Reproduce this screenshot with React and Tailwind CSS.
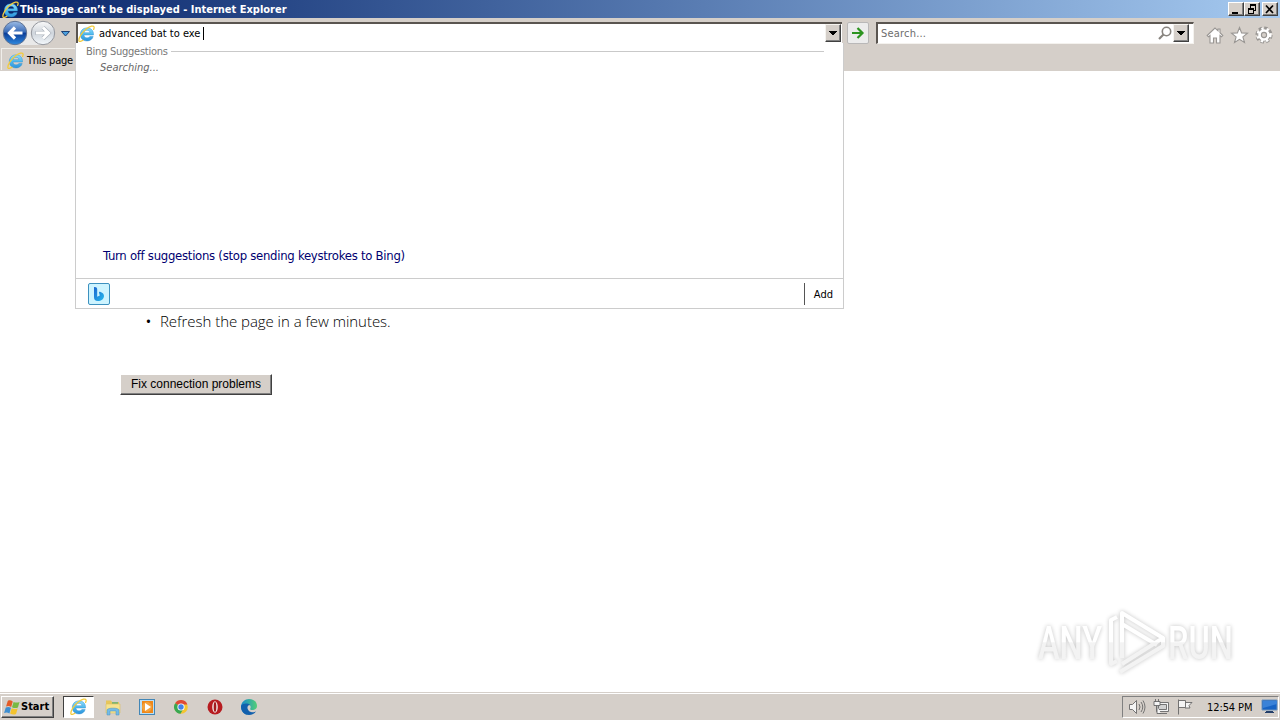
const TAHOMA = "font-['DejaVu_Sans_Condensed','DejaVu_Sans',sans-serif] [font-stretch:condensed]";

function IeIcon({ size = 16, id }) {
  return (
    <svg width={size} height={size} viewBox="0 0 16 16" className="shrink-0">
      <defs>
        <linearGradient id={id} x1="0" y1="0" x2="0" y2="1">
          <stop offset="0" stopColor="#8edcfb" />
          <stop offset=".5" stopColor="#4fb9ee" />
          <stop offset="1" stopColor="#2c93dc" />
        </linearGradient>
      </defs>
      <path
        d="M14.600 9.400H5.600c.1 1.700 1.300 2.700 3 2.700 1.200 0 2-.4 2.500-1.300h3.200c-.7 2.700-3 4.200-5.800 4.200-3.800 0-6.300-2.500-6.300-6.100 0-3.600 2.600-6.200 6.300-6.200 3.900 0 6.400 2.700 6.100 6.700ZM5.700 7.200h5.500c-.1-1.400-1.200-2.200-2.700-2.200s-2.600.8-2.800 2.200Z"
        fill={`url(#${id})`}
        stroke="#2d8ccb"
        strokeWidth=".4"
      />
      <path
        d="M4.600 14.300C2.600 15.700.9 16 .8 14.600.6 12 3.800 6.800 8 3.600 11.400 1 14.600.2 15.100 1.800c.2.700 0 1.500-.4 2.300"
        fill="none"
        stroke="#f3cb3c"
        strokeWidth="1.200"
        strokeLinecap="round"
      />
    </svg>
  );
}

function NavButtons() {
  return (
    <svg width="58" height="28" viewBox="0 0 58 28" className="shrink-0">
      <defs>
        <linearGradient id="back" x1="0" y1="0" x2="0" y2="1">
          <stop offset="0" stopColor="#9dbde6" />
          <stop offset=".45" stopColor="#3a6cb8" />
          <stop offset=".52" stopColor="#0c3f99" />
          <stop offset="1" stopColor="#2f8ae0" />
        </linearGradient>
        <linearGradient id="forward" x1="0" y1="0" x2="0" y2="1">
          <stop offset="0" stopColor="#fafafa" />
          <stop offset=".5" stopColor="#cfd5dc" />
          <stop offset="1" stopColor="#f3f8fc" />
        </linearGradient>
      </defs>
      <path d="M15 2h28v24H15z" fill="#e9e9e9" />
      <circle cx="15" cy="14" r="11.700" fill="url(#back)" stroke="#5f7394" />
      <circle cx="43" cy="14" r="11.700" fill="url(#forward)" stroke="#94979e" />
      <path d="M22.500 14H10M15 8.500 9.500 14l5.500 5.500" fill="none" stroke="#fff" strokeWidth="3.200" />
      <path d="M35.500 14H48M43 8.500l5.500 5.500-5.500 5.500" fill="none" stroke="#a9b0b9" strokeWidth="4.200" />
      <path d="M36 14h12M43 8.500l5.500 5.500-5.500 5.500" fill="none" stroke="#fff" strokeWidth="3" />
    </svg>
  );
}

function DropButton() {
  return (
    <div className="mb-[1px] flex h-[18px] w-[16px] shrink-0 items-center justify-center border border-t-[#f5f3ef] border-r-[#404040] border-b-[#404040] border-l-[#f5f3ef] bg-[#d5cfc9] shadow-[inset_-1px_-1px_0_#808080]">
      <svg width="8" height="5" viewBox="0 0 8 5" shapeRendering="crispEdges">
        <path d="M0 0h8L4 4.500Z" fill="#000" />
      </svg>
    </div>
  );
}

function WindowButton({ children, className = "" }) {
  return (
    <div
      className={`flex h-[14px] w-[16px] items-center justify-center border border-t-white border-r-[#404040] border-b-[#404040] border-l-white bg-[#d5cfc9] shadow-[inset_-1px_-1px_0_#808080] ${className}`}
    >
      <svg width="12" height="11" viewBox="0 0 12 11" fill="none" stroke="#000" shapeRendering="crispEdges">
        {children}
      </svg>
    </div>
  );
}

function TitleBar() {
  return (
    <div className="flex h-[18px] items-center bg-linear-to-r from-[#0a246a] to-[#a6caf0] pr-[2px] pl-[2px]">
      <IeIcon id="ie-title" size={17} />
      <span className={`ml-[1px] pt-[1px] text-[11px] leading-[17px] font-bold whitespace-nowrap text-white ${TAHOMA}`}>
        This page can’t be displayed - Internet Explorer
      </span>
      <div className="ml-auto flex">
        <WindowButton>
          <path d="M2 8.500h6M2 9.500h6" />
        </WindowButton>
        <WindowButton>
          <path d="M4 .5h6M4 1.500h6M4.500 1v3M9.500 1v6M8 6.500h2M2 4.500h6M2 5.500h6M2.500 5v5M7.500 5v5M2 9.500h6" />
        </WindowButton>
        <WindowButton className="ml-[2px]">
          <path d="m2 1.500 7 7.500M9 1.500 2 9" strokeWidth="1.700" shapeRendering="auto" />
        </WindowButton>
      </div>
    </div>
  );
}

function ToolIcons() {
  return (
    <svg
      width="72"
      height="20"
      viewBox="0 0 72 20"
      fill="#fff"
      stroke="#999693"
      strokeWidth="1.100"
      className="mt-[7px] ml-[12px] shrink-0"
    >
      <path d="m1.200 10.500 7.800-7.500 3 2.800V4h2v3.700l2.800 2.800-1.300 1.300-1.500-1.300V18h-3.500v-5h-3v5H4v-7.500l-1.500 1.300Z" />
      <path d="m33.500 2.500 2.100 5.400 5.900.300-4.600 3.700 1.600 5.600-5-3.200-5 3.200 1.600-5.600-4.600-3.700 5.900-.3Z" />
      <circle cx="58" cy="10" r="6.700" strokeWidth="3.800" strokeDasharray="3.200 2.060" />
      <circle cx="58" cy="10" r="6.300" />
      <circle cx="58" cy="10" r="6.300" fill="none" stroke="#fff" strokeWidth="2.600" strokeDasharray="2.200 3.060" />
      <circle cx="58" cy="10" r="4.800" stroke="#fff" />
      <circle cx="58" cy="10" r="2.600" fill="#d5cfc9" />
    </svg>
  );
}

function Toolbar() {
  return (
    <div className="flex h-[29px] items-start">
      <div className="mt-[1px]">
        <NavButtons />
      </div>
      <svg width="9" height="6" viewBox="0 0 9 6" className="mt-[13px] ml-[3px] shrink-0">
        <path d="M.5.5h8l-4 4.500Z" fill="#4ba1df" stroke="#1c4175" />
      </svg>
      <div className="mt-[4px] ml-[6px] flex h-[21px] w-[766px] items-center border-t-2 border-l-2 border-t-[#5a5550] border-l-[#5a5550] bg-white">
        <IeIcon id="ie-address" size={17} />
        <span className={`ml-[4px] pt-[2px] text-[11px] whitespace-nowrap text-black ${TAHOMA}`}>advanced bat to exe</span>
        <span className="ml-[3px] h-[13px] w-px bg-black" />
        <div className="mr-[1px] ml-auto">
          <DropButton />
        </div>
      </div>
      <div className="mt-[4px] ml-[5px] flex h-[22px] w-[22px] items-center justify-center rounded-xs border border-[#b9b8b8] bg-[#ececec]">
        <svg width="14" height="12" viewBox="0 0 14 12" fill="none" stroke="#2c9420" strokeWidth="2.200">
          <path d="M1 6h10M6.500 1l5 5-5 5" />
        </svg>
      </div>
      <div className="mt-[4px] ml-[7px] flex h-[22px] w-[318px] items-center border-t-2 border-r border-b border-l-2 border-t-[#5a5550] border-r-[#f4f2ee] border-b-[#f4f2ee] border-l-[#5a5550] bg-white">
        <span className={`ml-[3px] pt-[2px] text-[11px] tracking-[0.2px] text-[#6d6d6d] ${TAHOMA}`}>Search...</span>
        <svg width="14" height="15" viewBox="0 0 14 15" fill="none" stroke="#88847f" className="ml-auto">
          <circle cx="8.500" cy="5.500" r="4.200" strokeWidth="1.600" />
          <path d="M5.500 8.500 1 13" strokeWidth="2.200" />
        </svg>
        <div className="mr-[4px] ml-[1px]">
          <DropButton />
        </div>
      </div>
      <ToolIcons />
    </div>
  );
}

function TabRow() {
  return (
    <div className="flex h-[24px] items-center">
      <div className="ml-[1px] flex h-[22px] w-[200px] items-center border-t border-l border-[#f0eeea] pt-[1px] pl-[5px]">
        <IeIcon id="ie-tab" size={17} />
        <span className={`ml-[3px] pt-[2px] text-[11px] tracking-[-0.25px] whitespace-nowrap text-black ${TAHOMA}`}>
          This page
        </span>
      </div>
    </div>
  );
}

function Suggestions() {
  return (
    <div
      className={`absolute top-[43px] left-[75px] flex h-[266px] w-[769px] flex-col border border-t-0 border-[#cccccc] bg-white ${TAHOMA}`}
    >
      <div className="flex h-[17px] items-center pr-[19px] pl-[10px]">
        <span className="pt-[1px] text-[11px] leading-[16px] tracking-[-0.25px] whitespace-nowrap text-[#777]">
          Bing Suggestions
        </span>
        <div className="ml-[3px] h-px grow bg-[#c9c9c9]" />
      </div>
      <span className="pl-[24px] text-[11px] leading-[16px] text-[#666] italic">Searching...</span>
      <span className="mt-auto mb-[13px] pl-[27px] text-[13px] leading-[18px] tracking-[-0.28px] whitespace-nowrap text-[#000070]">
        Turn off suggestions (stop sending keystrokes to Bing)
      </span>
      <div className="flex h-[30px] shrink-0 items-center border-t border-[#ccc] pr-[10px] pl-[12px]">
        <svg width="22" height="22" viewBox="0 0 22 22">
          <defs>
            <linearGradient id="bing" x1="0" y1="0" x2="1" y2="1">
              <stop offset="0" stopColor="#1b66d0" />
              <stop offset="1" stopColor="#25b9ec" />
            </linearGradient>
          </defs>
          <rect x=".5" y=".5" width="21" height="21" rx="1.500" fill="#cdf4ff" stroke="#3d91bf" />
          <path
            d="M6 4.200c1.500-.5 3.200.3 3.200 2v7.600l2.600-1.300-.8-2.700c-.2-1 .6-1.200 1.500-.9 2.300.7 3.500 2 3.500 4 0 3-3 5-6 5s-4-1.500-4-4Z"
            fill="url(#bing)"
          />
        </svg>
        <div className="ml-auto h-[22px] w-px bg-[#555]" />
        <span className="ml-[9px] pt-[3px] text-[11px] text-black">Add</span>
      </div>
    </div>
  );
}

function Watermark() {
  return (
    <div className="absolute top-[606px] left-[1034px]">
      <svg
        width="220"
        height="72"
        viewBox="0 0 220 72"
        className="overflow-visible drop-shadow-[0_0_2px_#c4c4c4]"
      >
        <defs>
          <linearGradient id="mark" gradientUnits="userSpaceOnUse" x1="0" y1="0" x2="0" y2="72">
            <stop offset=".5" stopColor="#ffffff" />
            <stop offset=".51" stopColor="#f3f3f3" />
          </linearGradient>
        </defs>
        <g fill="url(#mark)" fontFamily="Roboto, sans-serif" fontSize="47" fontWeight="500">
          <text x="4" y="53" textLength="64" lengthAdjust="spacingAndGlyphs">
            ANY
          </text>
          <text x="134" y="53" textLength="65" lengthAdjust="spacingAndGlyphs">
            RUN
          </text>
        </g>
        <g fill="none" stroke="url(#mark)" strokeWidth="4" strokeLinejoin="round">
          <path d="M88 52V7l41 25-41 26" />
          <path d="M88 18l35 21M83 11l-6 3v44l6-3M86 66l43-26v-8" />
        </g>
      </svg>
    </div>
  );
}

function TaskIcons() {
  return (
    <>
      <svg width="18" height="18" viewBox="0 0 18 18" className="ml-[10px]">
        <path d="M2 2.500h5l1 1.500h7v9H2Z" fill="#e7c65b" />
        <path d="M8 4h6v3H8Z" fill="#7fb573" />
        <path d="M2 6h14v9H2Z" fill="#f6e38f" stroke="#dcbf62" strokeWidth=".6" />
        <path d="M3 17v-5c0-2.500 12-2.500 12 0v5h-3v-4H6v4Z" fill="#74bbe6" stroke="#4a90bd" strokeWidth=".5" />
      </svg>
      <svg width="16" height="16" viewBox="0 0 16 16" className="ml-[17px]">
        <rect x=".5" y=".5" width="15" height="15" fill="#bcdff4" stroke="#4386b6" />
        <rect x="3" y="2" width="11" height="12" fill="#ef8719" />
        <circle cx="8" cy="8" r="5" fill="#f4a23c" />
        <path d="m6 4 6 4-6 4Z" fill="#fff" />
      </svg>
      <svg width="16" height="16" viewBox="0 0 16 16" className="ml-[18px]">
        <circle cx="8" cy="8" r="6.800" fill="#f4c531" />
        <path d="M8 8 2.200 4.200a6.800 6.800 0 0 1 12.200 1.300H8Z" fill="#df4937" />
        <path d="M8 8 2.200 4.200A6.800 6.800 0 0 0 7.500 14.800l3-5.300Z" fill="#39a852" />
        <circle cx="8" cy="8" r="3.600" fill="#fff" />
        <circle cx="8" cy="8" r="2.700" fill="#4382e8" />
      </svg>
      <svg width="16" height="16" viewBox="0 0 16 16" className="ml-[18px]">
        <circle cx="8" cy="8" r="7.500" fill="#b71c20" />
        <ellipse cx="8" cy="8" rx="2.800" ry="5.800" fill="#f1e6e3" />
        <ellipse cx="8" cy="8" rx="1.300" ry="4.900" fill="#a31b1d" />
      </svg>
      <svg width="18" height="18" viewBox="0 0 18 18" className="ml-[17px]">
        <defs>
          <linearGradient id="edge" x1="0" y1="0" x2="1" y2="0">
            <stop offset="0" stopColor="#1688ce" />
            <stop offset="1" stopColor="#54cf77" />
          </linearGradient>
        </defs>
        <path
          d="M1 9C1 4 5 1 9 1c5 0 8 3 8 7 0 3-2.500 4-5 4-2 0-2-1-1.500-2 1-3-2-4-5-3C3 8 4 14 8 16.800 4 16 1 13 1 9Z"
          fill="url(#edge)"
        />
        <path d="M1 8c2-3 7-3 9-1-4 0-3 6 1 7 2 .5 4 0 5-.8-1.500 2.500-4 3.800-7 3.800-4.500 0-8-3-8-9Z" fill="#1260ad" />
      </svg>
    </>
  );
}

function Tray() {
  return (
    <div className="mr-[1px] ml-auto flex h-[22px] w-[157px] items-center border border-t-[#808080] border-r-white border-b-white border-l-[#808080] pl-[6px]">
      <svg width="68" height="18" viewBox="0 0 68 18" fill="#f4f4f4" stroke="#686868" strokeWidth=".9">
        <path d="M.5 6.500h3l4-4v13l-4-4h-3Z" />
        <path d="M10 6q2 3 0 6M12 4q3.500 5 0 10M14 2.500q4 6.500 0 13" fill="none" strokeWidth=".9" />
        <path d="M27.500 4.500h12v9h-12Z" />
        <path d="M29.500 6.500h8v5h-8Z" fill="#d1d1d1" />
        <path d="M30 15.500h8M26.500 1v3M29.500 1v3M25 3.500h6v4h-6ZM28 8v7.500h4" />
        <path d="M49.500 1.500v15M50 2.500h6.500v7H50M56.500 4.500h6.500l-3 3 1 2.500h-5" />
      </svg>
      <span className={`ml-[10px] pt-[3px] text-[11px] tracking-[-0.1px] whitespace-nowrap text-black ${TAHOMA}`}>
        12:54 PM
      </span>
      <svg width="17" height="15" viewBox="0 0 17 15" className="ml-auto shrink-0">
        <path d="M1 1h15v10H1Z" fill="#1763c4" stroke="#6d93bd" />
        <path d="M2 2h14v3L2 9Z" fill="#3a82d8" />
        <path d="M5 12h7v1h1v1H4v-1h1Z" fill="#243f69" />
      </svg>
    </div>
  );
}

function Taskbar() {
  return (
    <div className="flex h-[28px] items-center border-t border-[#d5cfc9] bg-[#d5cfc9] shadow-[inset_0_1px_0_#ffffff]">
      <div className="ml-[1px] flex h-[22px] w-[53px] items-center border border-t-white border-r-[#404040] border-b-[#404040] border-l-white pl-[2px] shadow-[inset_-1px_-1px_0_#808080]">
        <svg width="16" height="16" viewBox="0 0 17 16" className="shrink-0">
          <path d="M4 1.500c2-1 3.500-.5 5.300.6L7.600 8C5.500 6.800 4 6.800 2.200 7.600Z" fill="#e45b26" />
          <path d="M10.200 2.600c2 1 4 1 6.300 0l-1.700 5.900c-2 1-4.200.8-6.300-.3Z" fill="#78b943" />
          <path d="M1.900 8.600c2-1 3.800-.8 5.500.3L5.800 14.800c-2-1.200-4-1.200-5.700-.3Z" fill="#3e8ed0" />
          <path d="M8.200 9.300c2 1 4 1 6.300.2L12.800 15.400c-2 .9-4.200.7-6.300-.4Z" fill="#f3c32e" />
        </svg>
        <span className={`ml-[1px] pt-[2px] text-[11px] font-bold text-black ${TAHOMA}`}>Start</span>
      </div>
      <div className="ml-[9px] flex h-[22px] w-[31px] items-center justify-center border border-t-[#404040] border-r-white border-b-white border-l-[#404040] bg-white">
        <IeIcon id="ie-task" size={17} />
      </div>
      <TaskIcons />
      <Tray />
    </div>
  );
}

export default function App() {
  return (
    <div className="relative flex h-[720px] w-[1280px] flex-col overflow-hidden bg-white">
      <TitleBar />
      <div className="h-[53px] bg-[#d5cfc9]">
        <Toolbar />
        <TabRow />
      </div>
      <main className="grow">
        <ul className="mt-[239px] ml-[146px] font-['Open_Sans',sans-serif] text-[15px] leading-[22px] font-light tracking-[-0.04px] text-black">
          <li className="flex items-center">
            <span className="mr-[8px] w-[6px] pt-[1px] text-[13px] leading-[21px] font-semibold">•</span>Refresh the page in a few minutes.
          </li>
        </ul>
        <button className="mt-[42px] ml-[120px] block h-[21px] w-[152px] border border-t-white border-r-[#404040] border-b-[#404040] border-l-white bg-[#d5cfc9] pb-[1px] font-['Liberation_Sans',sans-serif] text-[12px] leading-[18px] whitespace-nowrap text-black shadow-[inset_-1px_-1px_0_#808080]">
          Fix connection problems
        </button>
      </main>
      <Taskbar />
      <Suggestions />
      <Watermark />
    </div>
  );
}
